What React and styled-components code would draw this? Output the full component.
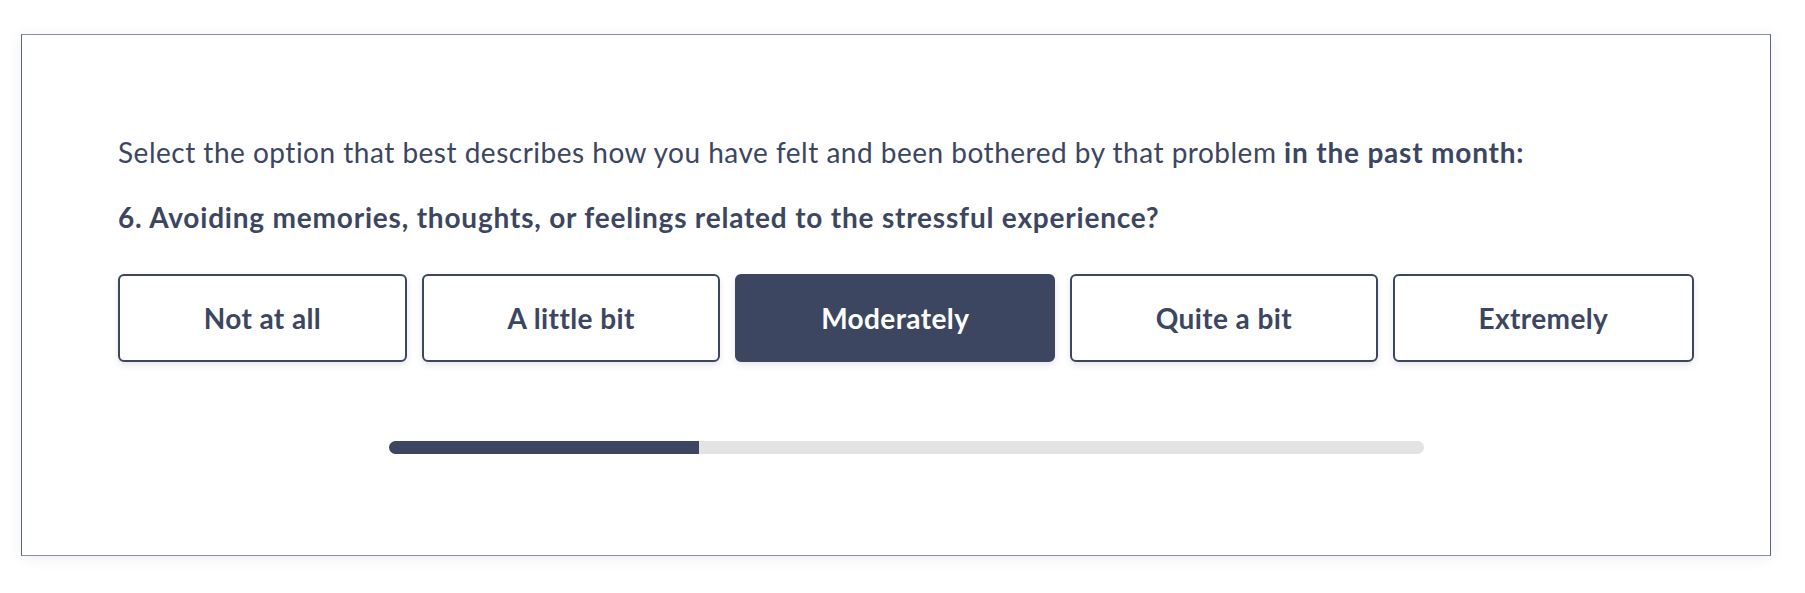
import React, { useState } from "react";
import styled, { createGlobalStyle } from "styled-components";

const GlobalStyle = createGlobalStyle`
  html, body {
    margin: 0;
    padding: 0;
    background: #ffffff;
  }
  body {
    font-family: Lato, "Open Sans", "Liberation Sans", sans-serif;
    color: #3c4661;
    -webkit-font-smoothing: antialiased;
  }
`;

const options = ["Not at all", "A little bit", "Moderately", "Quite a bit", "Extremely"];

const App = () => {
  const [picked, setPicked] = useState(2);
  const progress = 0.3;

  return (
    <>
      <GlobalStyle />
      <Page>
        <Card>
          <Intro>
            Select the option that best describes how you have felt and been
            bothered by that problem <strong>in the past month:</strong>
          </Intro>
          <Question>
            6. Avoiding memories, thoughts, or feelings related to the stressful
            experience?
          </Question>
          <Choices>
            {options.map((label, i) => (
              <Choice key={label} $active={i === picked} onClick={() => setPicked(i)}>
                {label}
              </Choice>
            ))}
          </Choices>
          <Track>
            <Fill style={{ width: `${progress * 100}%` }} />
          </Track>
        </Card>
      </Page>
    </>
  );
};

export default App;

const Page = styled.div`
  padding: 34px 34px 37px 21px;
`;

const Card = styled.div`
  border: 1px solid #8a8fa6;
  border-left-color: #5d6680;
  border-right-color: #5d6680;
  background: #ffffff;
  box-shadow: 0 2px 14px rgba(0, 0, 0, 0.07);
  padding: 99px 76px 101px 96px;
  display: flex;
  flex-direction: column;
`;

const Intro = styled.p`
  margin: 0;
  font-size: 28px;
  line-height: 36px;
  font-weight: 400;
  letter-spacing: 0.5px;
  white-space: nowrap;

  strong {
    font-weight: 700;
    letter-spacing: 0.8px;
  }
`;

const Question = styled.p`
  margin: 29px 0 0;
  font-size: 28px;
  line-height: 36px;
  font-weight: 700;
  letter-spacing: 0.8px;
  white-space: nowrap;
`;

const Choices = styled.div`
  display: flex;
  gap: 15px;
  margin-top: 39px;
`;

const Choice = styled.button`
  flex: 1 1 auto;
  height: 88px;
  padding: 0 16px;
  border: 2px solid #3c4661;
  border-radius: 6px;
  background: ${(p) => (p.$active ? "#3c4661" : "#ffffff")};
  color: ${(p) => (p.$active ? "#ffffff" : "#3c4661")};
  font-family: Lato, "Open Sans", "Liberation Sans", sans-serif;
  font-size: 28px;
  font-weight: 700;
  letter-spacing: 0.4px;
  box-shadow: 0 3px 7px rgba(0, 0, 0, 0.1);
  cursor: pointer;
`;

const Track = styled.div`
  width: 1035px;
  height: 13px;
  margin: 79px auto 0;
  border-radius: 7px;
  background: #e3e3e3;
  overflow: hidden;
`;

const Fill = styled.div`
  height: 100%;
  background: #3c4661;
`;
